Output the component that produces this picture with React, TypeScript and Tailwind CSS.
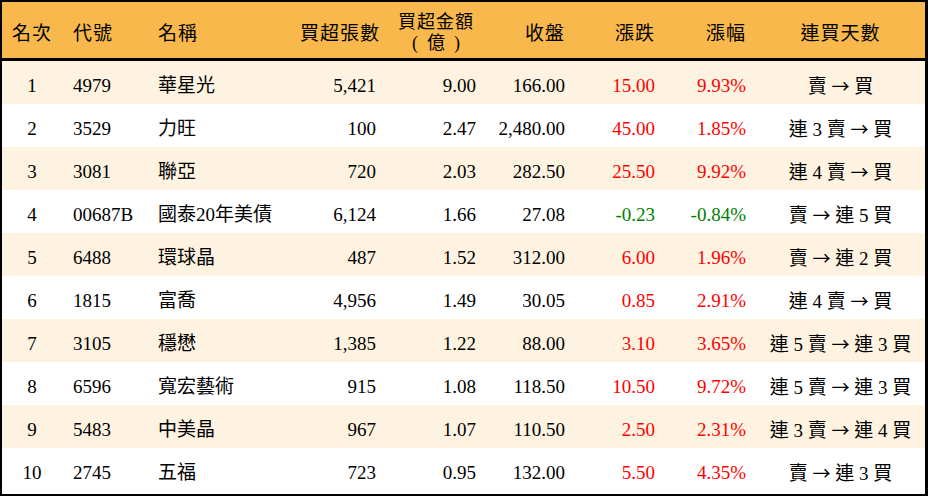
import React from "react";

type Row = {
  rank: number;
  code: string;
  name: string;
  lots: string;
  amount: string;
  close: string;
  change: string;
  pct: string;
  streak: string;
};

const rows: Row[] = [
  { rank: 1, code: "4979", name: "華星光", lots: "5,421", amount: "9.00", close: "166.00", change: "15.00", pct: "9.93%", streak: "賣 → 買" },
  { rank: 2, code: "3529", name: "力旺", lots: "100", amount: "2.47", close: "2,480.00", change: "45.00", pct: "1.85%", streak: "連 3 賣 → 買" },
  { rank: 3, code: "3081", name: "聯亞", lots: "720", amount: "2.03", close: "282.50", change: "25.50", pct: "9.92%", streak: "連 4 賣 → 買" },
  { rank: 4, code: "00687B", name: "國泰20年美債", lots: "6,124", amount: "1.66", close: "27.08", change: "-0.23", pct: "-0.84%", streak: "賣 → 連 5 買" },
  { rank: 5, code: "6488", name: "環球晶", lots: "487", amount: "1.52", close: "312.00", change: "6.00", pct: "1.96%", streak: "賣 → 連 2 買" },
  { rank: 6, code: "1815", name: "富喬", lots: "4,956", amount: "1.49", close: "30.05", change: "0.85", pct: "2.91%", streak: "連 4 賣 → 買" },
  { rank: 7, code: "3105", name: "穩懋", lots: "1,385", amount: "1.22", close: "88.00", change: "3.10", pct: "3.65%", streak: "連 5 賣 → 連 3 買" },
  { rank: 8, code: "6596", name: "寬宏藝術", lots: "915", amount: "1.08", close: "118.50", change: "10.50", pct: "9.72%", streak: "連 5 賣 → 連 3 買" },
  { rank: 9, code: "5483", name: "中美晶", lots: "967", amount: "1.07", close: "110.50", change: "2.50", pct: "2.31%", streak: "連 3 賣 → 連 4 買" },
  { rank: 10, code: "2745", name: "五福", lots: "723", amount: "0.95", close: "132.00", change: "5.50", pct: "4.35%", streak: "賣 → 連 3 買" },
];

const cols = "grid grid-cols-[60px_85px_153px_86px_100px_89px_90px_91px_1fr]";

// render the arrow in the CJK font so it comes out full-width like the reference
function Streak({ text }: { text: string }) {
  const [before, after] = text.split("→");
  return (
    <>
      {before}
      <span style={{ fontFamily: "'Noto Sans CJK TC', sans-serif" }} className="text-[18px]">→</span>
      {after}
    </>
  );
}

export default function App() {
  return (
    <div
      className="w-[928px] h-[496px] bg-white border-black border-t-2 border-l-2 border-r-[3px] border-b-2 text-black text-[19px] leading-none"
      style={{ fontFamily: "'Liberation Serif', 'Noto Sans CJK TC', serif" }}
    >
      <div className={`${cols} h-[59px] pt-[6px] items-center bg-[#f9b84b] border-b-[3px] border-black whitespace-nowrap`}>
        <div className="text-center tracking-[1px]">名次</div>
        <div className="pl-[11px] tracking-[1px]">代號</div>
        <div className="pl-[11px] tracking-[1px]">名稱</div>
        <div className="text-right pr-[9px] tracking-[1px]">買超張數</div>
        <div className="flex flex-col items-center gap-[3px] text-[18px] -mt-[2px]">
          <span className="tracking-[1px]">買超金額</span>
          <span className="flex items-center">
            <span className="mr-[9px]">(</span>
            <span>億</span>
            <span className="ml-[9px]">)</span>
          </span>
        </div>
        <div className="text-right pr-[10px] tracking-[1px]">收盤</div>
        <div className="text-right pr-[10px] tracking-[1px]">漲跌</div>
        <div className="text-right pr-[10px] tracking-[1px]">漲幅</div>
        <div className="text-center tracking-[1px]">連買天數</div>
      </div>
      {rows.map((r, i) => {
        const up = !r.change.startsWith("-");
        const color = up ? "text-[#ff0000]" : "text-[#008000]";
        return (
          <div
            key={r.rank}
            className={`${cols} h-[43px] pt-[6px] items-center ${i % 2 === 0 ? "bg-[#fef3e0]" : "bg-white"}`}
          >
            <div className="text-center">{r.rank}</div>
            <div className="pl-[11px]">{r.code}</div>
            <div className="pl-[11px] whitespace-nowrap">{r.name}</div>
            <div className="text-right pr-[10px]">{r.lots}</div>
            <div className="text-right pr-[10px]">{r.amount}</div>
            <div className="text-right pr-[10px]">{r.close}</div>
            <div className={`text-right pr-[10px] ${color}`}>{r.change}</div>
            <div className={`text-right pr-[10px] ${color}`}>{r.pct}</div>
            <div className="text-center whitespace-nowrap">
              <Streak text={r.streak} />
            </div>
          </div>
        );
      })}
    </div>
  );
}
